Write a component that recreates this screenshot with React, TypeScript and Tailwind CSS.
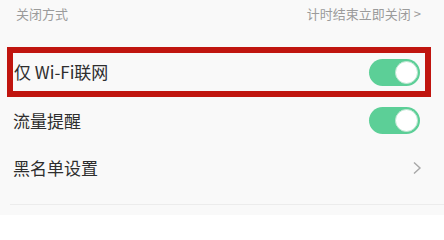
import React from "react";

const font = { fontFamily: '"Noto Sans CJK SC", "Noto Sans", sans-serif' };

function Toggle() {
  return (
    <div className="flex h-[27px] w-[51px] flex-none items-center justify-end rounded-full bg-[#5ccf97] pr-[2px]">
      <div className="h-[23px] w-[23px] rounded-full border border-[#bfe6d2] bg-white" />
    </div>
  );
}

function Chevron() {
  return (
    <svg width="10" height="14" viewBox="0 0 10 14" className="flex-none">
      <polyline points="2,1.5 8,7 2,12.5" fill="none" stroke="#a8a8a8" strokeWidth="1.4" />
    </svg>
  );
}

export default function App() {
  return (
    <div className="flex h-[215px] w-[444px] flex-col overflow-hidden bg-[#f9f9f9]" style={font}>
      {/* header: close mode */}
      <div className="flex h-[28px] items-center justify-between pl-[16px] pr-[23px] text-[13px] text-[#9b9b9b]">
        <span>关闭方式</span>
        <span>计时结束立即关闭 &gt;</span>
      </div>

      <div className="h-[19px]" />

      {/* highlighted row */}
      <div className="ml-[7px] mr-[13px] flex h-[50px] items-center justify-between border-[6px] border-[#c0150f] pl-[1px] pr-[5px]">
        <span className="text-[17px] text-[#2e2e2e]">仅 Wi-Fi联网</span>
        <Toggle />
      </div>

      <div className="flex h-[47px] items-center justify-between pl-[13px] pr-[24px]">
        <span className="text-[17px] text-[#2e2e2e]">流量提醒</span>
        <Toggle />
      </div>

      <div className="flex h-[47px] items-center justify-between pl-[13px] pr-[22px]">
        <span className="text-[17px] text-[#2e2e2e]">黑名单设置</span>
        <Chevron />
      </div>

      <div className="mt-[13px] ml-[10px] h-px bg-[#ececec]" />
    </div>
  );
}
